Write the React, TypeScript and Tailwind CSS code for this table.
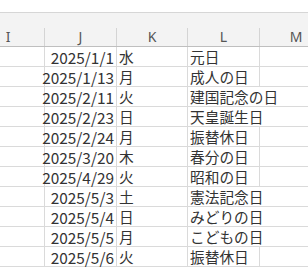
type Row = {
  date: string;
  day: string;
  name: string;
  spill: boolean; // 祝日名がM列まではみ出す
};

const rows: Row[] = [
  { date: '2025/1/1', day: '水', name: '元日', spill: false },
  { date: '2025/1/13', day: '月', name: '成人の日', spill: false },
  { date: '2025/2/11', day: '火', name: '建国記念の日', spill: true },
  { date: '2025/2/23', day: '日', name: '天皇誕生日', spill: true },
  { date: '2025/2/24', day: '月', name: '振替休日', spill: false },
  { date: '2025/3/20', day: '木', name: '春分の日', spill: false },
  { date: '2025/4/29', day: '火', name: '昭和の日', spill: false },
  { date: '2025/5/3', day: '土', name: '憲法記念日', spill: true },
  { date: '2025/5/4', day: '日', name: 'みどりの日', spill: true },
  { date: '2025/5/5', day: '月', name: 'こどもの日', spill: true },
  { date: '2025/5/6', day: '火', name: '振替休日', spill: false },
]

const HeadCell = ({ label, w, last }: { label: string; w: string; last?: boolean }) => (
  <div
    className={`${w} shrink-0 h-full flex items-center justify-center ${last ? '' : 'border-r border-[#d4d4d4]'}`}
  >
    {label}
  </div>
)

export default function App() {
  return (
    <div className="w-[308px] h-[268px] overflow-hidden bg-white text-[#333]">
      <div className="h-[13px] border-b border-[#d6d6d6]" />
      <div className="h-[34px] bg-[#f3f3f3] border-b border-[#bfbfbf] flex flex-col">
        <div className="h-[15px]" />
        <div
          className="h-[18px] -ml-[28px] flex text-[14px] text-[#555] leading-none"
          style={{ fontFamily: '"Noto Sans", sans-serif' }}
        >
          <HeadCell label="I" w="w-[73px]" />
          <HeadCell label="J" w="w-[72px]" />
          <HeadCell label="K" w="w-[71px]" />
          <HeadCell label="L" w="w-[72px]" />
          <HeadCell label="M" w="w-[72px]" last />
        </div>
      </div>
      <div
        className="-ml-[28px] text-[14.7px]"
        style={{ fontFamily: '"Noto Sans CJK JP", sans-serif' }}
      >
        {rows.map((r) => (
          <div key={r.date} className="h-[20px] flex border-b border-[#dadada] leading-[18px]">
            <div className="w-[73px] shrink-0 border-r border-[#dadada]" />
            <div className="w-[72px] shrink-0 border-r border-[#dadada] flex items-end justify-end pr-[2px] whitespace-nowrap text-[15.4px]">
              {r.date}
            </div>
            <div className="w-[71px] shrink-0 border-r border-[#dadada] flex items-end pl-[2px]">
              {r.day}
            </div>
            <div
              className={`w-[72px] shrink-0 flex items-end pl-[2px] whitespace-nowrap ${r.spill ? 'border-r border-transparent' : 'border-r border-[#dadada]'}`}
            >
              {r.name}
            </div>
            <div className="w-[72px] shrink-0" />
          </div>
        ))}
      </div>
    </div>
  )
}
